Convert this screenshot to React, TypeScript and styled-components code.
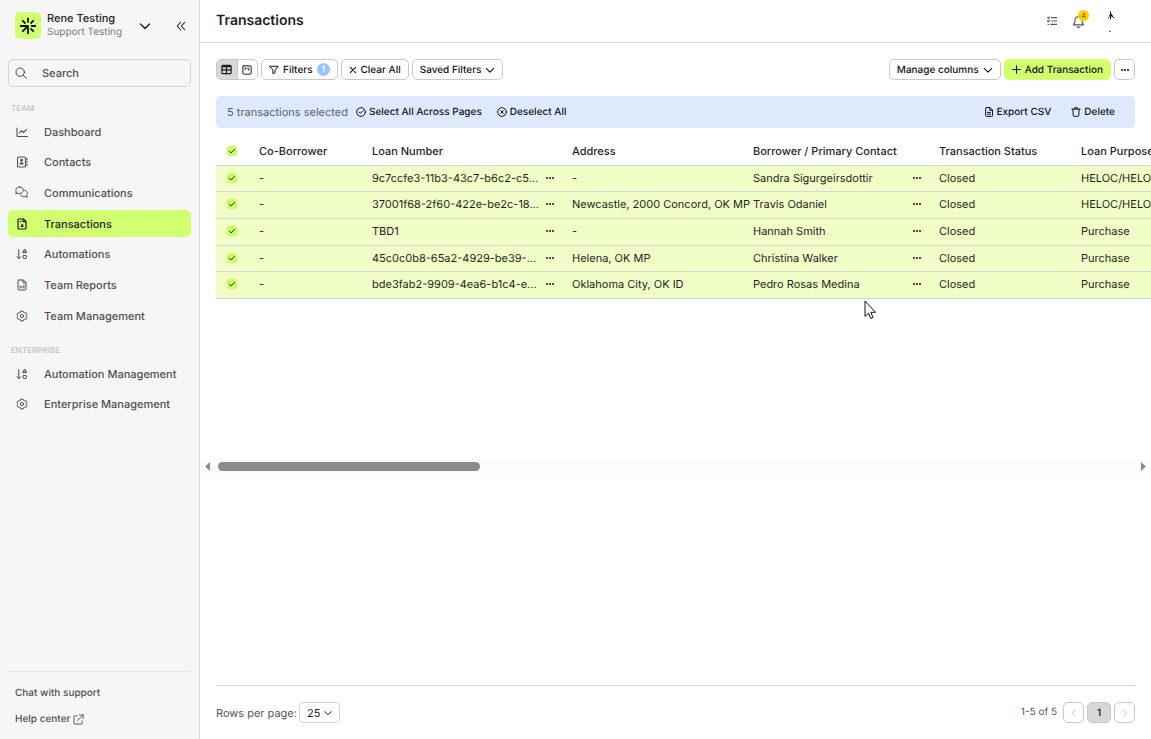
import React from "react";
import styled, { createGlobalStyle, css } from "styled-components";

const Global = createGlobalStyle`
  *, *::before, *::after { box-sizing: border-box; }
  html, body, #root { height: 100%; }
  body {
    margin: 0;
    background: #fff;
    color: #1f1f1f;
    font: 400 11px/16px Inter, "Liberation Sans", sans-serif;
    text-rendering: geometricPrecision;
  }
  button, input, select { font: inherit; color: inherit; text-rendering: inherit; }
  h1, h2, p, ul { margin: 0; padding: 0; }
`;

/* ---------- icons ---------- */

type IconProps = { size?: number; weight?: number; box?: number; children?: React.ReactNode };

const Svg = styled.svg`
  display: block;
  flex: none;
`;

const Icon = ({ size = 12, weight = 1.2, box = 12, children }: IconProps) => (
  <Svg
    width={size}
    height={size}
    viewBox={`0 0 ${box} ${box}`}
    fill="none"
    stroke="currentColor"
    strokeWidth={weight}
    strokeLinecap="round"
    strokeLinejoin="round"
    aria-hidden="true"
  >
    {children}
  </Svg>
);

const ChevronDown = ({ size = 10, weight = 1.2 }: IconProps) => (
  <Icon size={size} weight={weight}><path d="M1.5 4 6 8.5 10.5 4" /></Icon>
);
const ChevronLeft = () => <Icon size={8}><path d="M8 1.5 3.5 6 8 10.5" /></Icon>;
const ChevronRight = () => <Icon size={8}><path d="M4 1.5 8.5 6 4 10.5" /></Icon>;
const CollapseIcon = () => (
  <Icon size={10} weight={1.3}><path d="M5.5 1.500 1.500 6l4 4.500M10.500 1.500 6.500 6l4 4.500" /></Icon>
);
const SearchIcon = () => (
  <Icon size={12} weight={1}><circle cx="5.2" cy="5.2" r="4.2" /><path d="m8.4 8.4 2.9 2.9" /></Icon>
);
const DashboardIcon = () => (
  <Icon weight={1.1}><path d="M1 2v7.500a1 1 0 0 0 1 1h9.500M3.300 7l2-2.500 2 2 3.200-2.900" /></Icon>
);
const ContactsIcon = () => (
  <Icon weight={1.1}>
    <rect x="1.5" y="1" width="8" height="10" rx="1.3" />
    <path d="M11 2.400v1.300M11 5.400v1.300M11 8.400v1.300" />
    <circle cx="5.500" cy="4.300" r=".9" fill="currentColor" />
    <path d="M3.900 8c0-1.500 3.200-1.500 3.200 0z" fill="currentColor" />
  </Icon>
);
const ChatsIcon = () => (
  <Icon size={13} box={13} weight={1}>
    <path d="M4.500 1C2.500 1 .8 2.300.8 4.200c0 .8.2 1.300.6 1.800L.7 7.700l2-.5c.6.2 1.200.3 1.800.3 2.100 0 3.800-1.400 3.800-3.300S6.600 1 4.500 1z" />
    <path d="M9.600 4.500c1.600.3 2.800 1.500 2.800 3 0 .7-.3 1.300-.7 1.800l.6 1.900-2-.6c-2 .6-4.300-.1-5.100-1.800" />
  </Icon>
);
const TransactionDocIcon = () => (
  <Icon weight={1.2}>
    <path d="M3 1h4.500L10 3.500V10a1 1 0 0 1-1 1H3a1 1 0 0 1-1-1V2a1 1 0 0 1 1-1z" />
    <path d="M7 1.200v2.500h2.800M4.200 3.700h.5M5 8.500h2M5.500 7.300l.7-.6.7.6" />
  </Icon>
);
const AutomationIcon = () => (
  <Icon weight={1}>
    <path d="M2.800 1.500v9M1 8.700l1.800 2 1.800-2" />
    <path d="m8.800 1.300 1.900 3.200H6.900z" fill="currentColor" fillOpacity=".4" />
    <rect x="7.200" y="7.300" width="3.200" height="3.200" rx=".6" />
  </Icon>
);
const ReportIcon = () => (
  <Icon weight={1}>
    <path d="M3 1h4.500L10 3.500V10a1 1 0 0 1-1 1H3a1 1 0 0 1-1-1V2a1 1 0 0 1 1-1z" />
    <path d="M7 1.200v2.500h2.800M4.200 9V7M6 9V7.500M7.900 9V6" />
  </Icon>
);
const GearIcon = () => (
  <Icon weight={1}>
    <path d="M4.800 1.200h2.400l.4 1.300 1 .6 1.300-.3 1.200 2-.9 1v.6l.9 1-1.200 2-1.300-.3-1 .6-.4 1.300H4.800l-.4-1.300-1-.6-1.300.3-1.200-2 .9-1v-.6l-.9-1 1.200-2 1.300.3 1-.6z" />
    <circle cx="6" cy="6.100" r="1.600" />
  </Icon>
);
const ExternalIcon = () => (
  <Icon size={11} weight={1}><path d="M4.500 2H2a1 1 0 0 0-1 1v7a1 1 0 0 0 1 1h7a1 1 0 0 0 1-1V7.500M7 1h4v4M11 1 5 7" /></Icon>
);
const TableIcon = () => (
  <Icon size={11} weight={1.300}>
    <rect x="1" y="1.500" width="10" height="9" rx="1" />
    <path d="M1 2.800h10M1 6.500h10M6 3v7.500" />
  </Icon>
);
const BoardIcon = () => (
  <Icon size={10}><rect x="1" y="1" width="10" height="10" rx="1.300" /><path d="M3.800 3.500v2M6 3.500v1M8.200 3.500v3" /></Icon>
);
const FunnelIcon = () => (
  <Icon size={10}><path d="M1 1.500h10L7.300 6.300V9L4.700 10.700V6.300z" /></Icon>
);
const CloseIcon = () => <Icon size={8} weight={1.600}><path d="m2 2 8 8M10 2l-8 8" /></Icon>;
const PlusIcon = () => <Icon size={9} weight={1.400}><path d="M6 1v10M1 6h10" /></Icon>;
const DotsIcon = ({ size = 12 }: IconProps) => (
  <Icon size={size}>
    <g fill="currentColor" stroke="none">
      <rect x="2" y="5" width="2" height="2" rx=".9" />
      <rect x="5" y="5" width="2" height="2" rx=".9" />
      <rect x="8" y="5" width="2" height="2" rx=".9" />
    </g>
  </Icon>
);
const CheckCircleIcon = () => (
  <Icon size={10}><circle cx="6" cy="6" r="5.200" /><path d="m3.700 6.200 1.600 1.600 3-3.400" /></Icon>
);
const CloseCircleIcon = () => (
  <Icon size={10}><circle cx="6" cy="6" r="5.200" /><path d="m4.300 4.300 3.400 3.400M7.700 4.300 4.300 7.700" /></Icon>
);
const FileIcon = () => (
  <Icon size={10}>
    <path d="M3 .7h4.300L10.300 3.700v6.600a1 1 0 0 1-1 1H3a1 1 0 0 1-1-1V1.700a1 1 0 0 1 1-1z" />
    <path d="M7 .8V4h3M4.200 6.500h3.600M4.200 8.700h3.600" />
  </Icon>
);
const TrashIcon = () => (
  <Icon size={10}><path d="M1 2.500h10M4 2.300l.5-1.500h3L8 2.300M2.200 2.800l.5 7.500a1 1 0 0 0 1 .9h4.600a1 1 0 0 0 1-.9l.5-7.500" /></Icon>
);
const ChecklistIcon = () => (
  <Icon size={10} weight={1.4}>
    <path d="M5.500 2h6M5.500 6h6M4.500 10h7M.7 2l.9.900 1.600-2M.7 6l.9.900 1.600-2M1.300 10h.5" />
  </Icon>
);
const BellIcon = () => (
  <Icon size={13} weight={1}>
    <path d="M6 .6v.8M6 1.500c2 0 3.200 1.500 3.200 3.300 0 2.400.7 3.200 1.600 4.300H1.200c.9-1.100 1.600-1.900 1.600-4.300C2.800 3 4 1.500 6 1.500zM4.700 10.800c.6.800 2 .8 2.600 0" />
  </Icon>
);
const AvatarMark = () => (
  <Svg width="12" height="22" viewBox="0 0 12 22" fill="#111" aria-hidden="true">
    <path d="M6 .5h1V3h1v1.500h1V6H8v-.5H7v2L6 9V5.500H5V4.300h1z" />
    <path d="M4 6.500h1v1H4zM9 6h1v1H9zM5.500 19.500h1V21h-1z" />
  </Svg>
);
const LogoMark = () => (
  <Icon size={18} box={18} weight={1.8}>
    <g strokeLinecap="butt">
      <path d="M9 .8v4.700M1 9h5M12 9h5M3.300 3.300l3.200 3.200M14.700 3.300l-3.200 3.200M3.300 14.700 9 9M14.700 14.700l-3.200-3.200" />
      <path d="M9 17V9H4.500" />
    </g>
  </Icon>
);

/* ---------- shell ---------- */

const Shell = styled.div`
  display: flex;
  min-height: 100vh;
`;
const Sidebar = styled.aside`
  display: flex;
  flex-direction: column;
  flex: none;
  width: 200px;
  padding: 0 8px;
  background: #f6f6f6;
  border-right: 1px solid #d6d6d6;
`;
const Workspace = styled.div`
  display: flex;
  flex: none;
  align-items: center;
  height: 51px;
  padding-left: 7px;
`;
const Logo = styled.span`
  display: grid;
  place-items: center;
  flex: none;
  width: 26px;
  height: 27px;
  border-radius: 5px;
  background: #d1ff70;
  color: #111;
`;
const WorkspaceText = styled.div`
  flex: 1;
  padding-left: 6px;
  line-height: 13px;
  white-space: nowrap;
`;
const WorkspaceName = styled.div`
  font-weight: 500;
`;
const WorkspaceSub = styled.div`
  font-size: 10px;
  line-height: 14px;
  color: #7c7c7c;
`;
const GhostButton = styled.button<{ $w?: number }>`
  display: grid;
  place-items: center;
  flex: none;
  width: ${(p) => p.$w ?? 20}px;
  height: 20px;
  padding: 0;
  border: 0;
  background: none;
  cursor: pointer;
`;
const CollapseButton = styled(GhostButton)`
  margin-left: 16px;
`;
const SearchBox = styled.label`
  display: flex;
  flex: none;
  align-items: center;
  gap: 15px;
  height: 28px;
  margin-top: 8px;
  padding: 0 6px;
  border: 1px solid #d4d4d4;
  border-radius: 5px;
  color: #444;
`;
const SearchInput = styled.input`
  flex: 1;
  min-width: 0;
  padding: 0;
  border: 0;
  outline: 0;
  background: none;
  font-weight: 500;
  &::placeholder { color: #505050; opacity: 1; }
`;
const GroupTitle = styled.h2`
  margin: 15px 3px 4px;
  font-size: 8px;
  line-height: 12px;
  font-weight: 600;
  color: #c4c4c4;
`;
const NavList = styled.ul`
  list-style: none;
`;
const NavItem = styled.li`
  margin-bottom: 4px;
  &:nth-child(3n + 1) { margin-bottom: 3px; }
`;
const NavLink = styled.a<{ $active?: boolean }>`
  display: flex;
  align-items: center;
  height: 27px;
  padding-left: 7px;
  gap: 16px;
  border-radius: 5px;
  font-weight: 500;
  color: #505050;
  text-decoration: none;
  ${(p) => p.$active && css`background: #d1ff70; color: #1f1f1f;`}
`;
const NavIcon = styled.span`
  display: grid;
  place-items: center;
  width: 13px;
`;
const Support = styled.div`
  display: flex;
  flex-direction: column;
  gap: 10px;
  margin-top: auto;
  padding: 13px 7px 12px;
  border-top: 1px solid #e6e6e6;
`;
const SupportLink = styled.a`
  display: flex;
  align-items: center;
  gap: 3px;
  font-size: 10px;
  font-weight: 500;
  color: #505050;
  text-decoration: none;
`;

/* ---------- main ---------- */

const Main = styled.main`
  display: flex;
  flex: 1;
  flex-direction: column;
  min-width: 0;
`;
const Header = styled.header`
  display: flex;
  flex: none;
  align-items: center;
  justify-content: space-between;
  height: 43px;
  padding: 0 26px 0 16px;
  border-bottom: 1px solid #d6d6d6;
`;
const Title = styled.h1`
  font-size: 14px;
  line-height: 20px;
  font-weight: 600;
`;
const HeaderActions = styled.div`
  display: flex;
  align-items: center;
  gap: 6px;
  color: #555;
`;
const BellButton = styled(GhostButton)`
  position: relative;
`;
const Badge = styled.span`
  position: absolute;
  top: -1px;
  right: -1px;
  width: 11px;
  height: 11px;
  border-radius: 6px;
  background: #fc0;
  font-size: 7px;
  line-height: 11px;
  color: #6b5600;
  text-align: center;
`;
const Toolbar = styled.div`
  display: flex;
  flex: none;
  justify-content: space-between;
  margin: 16px;
`;
const ButtonRow = styled.div`
  display: flex;
  gap: 3px;
`;
const Button = styled.button<{ $primary?: boolean }>`
  display: flex;
  align-items: center;
  gap: 4px;
  height: 21px;
  padding: 0 7px;
  border: 1px solid ${(p) => (p.$primary ? "#d1ff70" : "#c9c9c9")};
  border-radius: 5px;
  background: ${(p) => (p.$primary ? "#d1ff70" : "#fff")};
  font-size: 10px;
  font-weight: 500;
  color: #111;
  white-space: nowrap;
  cursor: pointer;
`;
const SquareButton = styled(Button)<{ $w?: number; $on?: boolean }>`
  justify-content: center;
  width: ${(p) => p.$w ?? 21}px;
  padding: 0;
  ${(p) => p.$on && css`background: #d8d8d8;`}
  &:disabled { color: #b5b5b5; cursor: default; }
`;
const ViewToggle = styled.div`
  display: flex;
  overflow: hidden;
  width: 42px;
  height: 21px;
  border: 1px solid #c9c9c9;
  border-radius: 5px;
`;
const ViewButton = styled.button<{ $on?: boolean }>`
  display: grid;
  flex: 1;
  place-items: center;
  padding: 0;
  border: 0;
  background: ${(p) => (p.$on ? "#d8d8d8" : "#fff")};
  & + & { border-left: 1px solid #c9c9c9; }
`;
const Count = styled.span`
  width: 13px;
  height: 13px;
  border-radius: 7px;
  background: #94c5fb;
  font-size: 9px;
  line-height: 13px;
  color: #fff;
  text-align: center;
`;
const SelectionBar = styled.div`
  display: flex;
  flex: none;
  align-items: center;
  justify-content: space-between;
  height: 32px;
  margin: 0 16px;
  padding: 0 20px 0 11px;
  border-radius: 5px;
  background: #deeafc;
`;
const BarGroup = styled.div<{ $gap: number }>`
  display: flex;
  align-items: center;
  gap: ${(p) => p.$gap}px;
`;
const SelectedText = styled.span`
  color: #5c6068;
`;
const BarButton = styled.button`
  display: flex;
  align-items: center;
  gap: 3px;
  padding: 0;
  border: 0;
  background: none;
  font-size: 10px;
  font-weight: 500;
  color: #111;
  white-space: nowrap;
  cursor: pointer;
`;

/* ---------- table ---------- */

const TableArea = styled.div`
  position: relative;
  flex: none;
  height: 331px;
  padding-left: 16px;
  overflow: hidden;
`;
const Table = styled.table`
  width: 100%;
  min-width: 1020px;
  border-collapse: separate;
  border-spacing: 0;
  table-layout: fixed;
`;
const Th = styled.th<{ $w?: number }>`
  width: ${(p) => (p.$w ? `${p.$w}px` : "auto")};
  height: 38px;
  padding: 8px 8px 0;
  border-bottom: 1px solid #d6d6d6;
  font-weight: 500;
  text-align: left;
  white-space: nowrap;
`;
const Row = styled.tr`
  height: 27px;
  background: #f1fdc6;
  &:nth-child(3n + 1) { height: 26px; }
`;
const Td = styled.td`
  padding: 0 8px 2px;
  border-bottom: 1px solid #d6d6d6;
  line-height: 16px;
  white-space: nowrap;
`;
const CellWithMenu = styled.div`
  display: flex;
  align-items: center;
  justify-content: space-between;
`;
const MenuButton = styled(GhostButton)`
  width: 12px;
  height: 12px;
`;
const CheckLabel = styled.label`
  display: grid;
  width: 10px;
  margin-left: 3px;
  & > * { grid-area: 1 / 1; }
`;
const Check = styled.input`
  appearance: none;
  width: 10px;
  height: 10px;
  margin: 0;
  border-radius: 3px;
  background: #c9fb5e;
`;
const Scrollbar = styled.div`
  display: flex;
  flex: none;
  align-items: center;
  height: 15px;
  padding: 0 5px;
  gap: 8px;
  background: #fcfcfc;
  color: #8b8b8b;
`;
const Track = styled.div`
  flex: 1;
`;
const Thumb = styled.div`
  width: 262px;
  height: 9px;
  border-radius: 5px;
  background: #8b8b8b;
`;
const Pointer = styled.svg`
  position: absolute;
  left: 664px;
  top: 172px;
`;
const Footer = styled.footer`
  display: flex;
  flex: none;
  align-items: center;
  justify-content: space-between;
  margin: auto 16px 0;
  padding: 16px 0;
  border-top: 1px solid #d6d6d6;
  color: #555;
`;
const RowsLabel = styled.label`
  display: flex;
  align-items: center;
  gap: 2px;
`;
const SelectWrap = styled.span`
  display: grid;
  align-items: center;
  color: #1f1f1f;
  & > * { grid-area: 1 / 1; }
  & > svg { justify-self: end; margin-right: 8px; pointer-events: none; }
`;
const Select = styled.select`
  appearance: none;
  width: 41px;
  height: 21px;
  padding: 0 7px;
  border: 1px solid #d4d4d4;
  border-radius: 4px;
  background: #fff;
`;
const PageInfo = styled.span`
  margin-right: 3px;
  font-size: 10px;
  line-height: 21px;
`;

/* ---------- data ---------- */

const team = [
  { label: "Dashboard", icon: <DashboardIcon /> },
  { label: "Contacts", icon: <ContactsIcon /> },
  { label: "Communications", icon: <ChatsIcon /> },
  { label: "Transactions", icon: <TransactionDocIcon />, active: true },
  { label: "Automations", icon: <AutomationIcon /> },
  { label: "Team Reports", icon: <ReportIcon /> },
  { label: "Team Management", icon: <GearIcon /> },
];
const enterprise = [
  { label: "Automation Management", icon: <AutomationIcon /> },
  { label: "Enterprise Management", icon: <GearIcon /> },
];
const rows = [
  { loan: "9c7ccfe3-11b3-43c7-b6c2-c5...", address: "-", name: "Sandra Sigurgeirsdottir", purpose: "HELOC/HELOAN" },
  { loan: "37001f68-2f60-422e-be2c-18...", address: "Newcastle, 2000 Concord, OK MP", name: "Travis Odaniel", purpose: "HELOC/HELOAN" },
  { loan: "TBD1", address: "-", name: "Hannah Smith", purpose: "Purchase" },
  { loan: "45c0c0b8-65a2-4929-be39-...", address: "Helena, OK MP", name: "Christina Walker", purpose: "Purchase" },
  { loan: "bde3fab2-9909-4ea6-b1c4-e...", address: "Oklahoma City, OK ID", name: "Pedro Rosas Medina", purpose: "Purchase" },
];

type NavEntry = { label: string; icon: React.ReactNode; active?: boolean };

const Nav = ({ items }: { items: NavEntry[] }) => (
  <NavList>
    {items.map((item) => (
      <NavItem key={item.label}>
        <NavLink href="#" $active={item.active} aria-current={item.active ? "page" : undefined}>
          <NavIcon>{item.icon}</NavIcon>
          {item.label}
        </NavLink>
      </NavItem>
    ))}
  </NavList>
);

const Checkbox = ({ label }: { label: string }) => (
  <CheckLabel>
    <Check type="checkbox" defaultChecked aria-label={label} />
    <Icon size={10} weight={1.1}><path d="m3 6.300 2 2 4-4.300" /></Icon>
  </CheckLabel>
);

const WithMenu = ({ text }: { text: string }) => (
  <CellWithMenu>
    {text}
    <MenuButton aria-label="Cell options"><DotsIcon /></MenuButton>
  </CellWithMenu>
);

export default function App() {
  return (
    <>
      <Global />
      <Shell>
        <Sidebar>
          <Workspace>
            <Logo><LogoMark /></Logo>
            <WorkspaceText>
              <WorkspaceName>Rene Testing</WorkspaceName>
              <WorkspaceSub>Support Testing</WorkspaceSub>
            </WorkspaceText>
            <GhostButton aria-label="Switch workspace"><ChevronDown size={12} weight={1.4} /></GhostButton>
            <CollapseButton aria-label="Collapse sidebar"><CollapseIcon /></CollapseButton>
          </Workspace>
          <SearchBox>
            <SearchIcon />
            <SearchInput type="text" placeholder="Search" aria-label="Search" />
          </SearchBox>
          <nav>
            <GroupTitle>TEAM</GroupTitle>
            <Nav items={team} />
            <GroupTitle>ENTERPRISE</GroupTitle>
            <Nav items={enterprise} />
          </nav>
          <Support>
            <SupportLink href="#">Chat with support</SupportLink>
            <SupportLink href="#">Help center <ExternalIcon /></SupportLink>
          </Support>
        </Sidebar>
        <Main>
          <Header>
            <Title>Transactions</Title>
            <HeaderActions>
              <GhostButton aria-label="Tasks"><ChecklistIcon /></GhostButton>
              <BellButton aria-label="Notifications"><BellIcon /><Badge>4</Badge></BellButton>
              <GhostButton $w={31} aria-label="Account"><AvatarMark /></GhostButton>
            </HeaderActions>
          </Header>
          <Toolbar>
            <ButtonRow>
              <ViewToggle>
                <ViewButton $on aria-label="Table view"><TableIcon /></ViewButton>
                <ViewButton aria-label="Board view"><BoardIcon /></ViewButton>
              </ViewToggle>
              <Button><FunnelIcon />Filters<Count>1</Count></Button>
              <Button><CloseIcon />Clear All</Button>
              <Button>Saved Filters<ChevronDown weight={1.3} /></Button>
            </ButtonRow>
            <ButtonRow>
              <Button>Manage columns<ChevronDown weight={1.3} /></Button>
              <Button $primary><PlusIcon />Add Transaction</Button>
              <SquareButton aria-label="More"><DotsIcon /></SquareButton>
            </ButtonRow>
          </Toolbar>
          <SelectionBar>
            <BarGroup $gap={8}>
              <SelectedText>5 transactions selected</SelectedText>
              <BarGroup $gap={15}>
                <BarButton><CheckCircleIcon />Select All Across Pages</BarButton>
                <BarButton><CloseCircleIcon />Deselect All</BarButton>
              </BarGroup>
            </BarGroup>
            <BarGroup $gap={20}>
              <BarButton><FileIcon />Export CSV</BarButton>
              <BarButton><TrashIcon />Delete</BarButton>
            </BarGroup>
          </SelectionBar>
          <TableArea>
            <Table>
              <thead>
                <tr>
                  <Th $w={35}><Checkbox label="Select all rows" /></Th>
                  <Th $w={113}>Co-Borrower</Th>
                  <Th $w={200}>Loan Number</Th>
                  <Th $w={181}>Address</Th>
                  <Th $w={186}>Borrower / Primary Contact</Th>
                  <Th $w={142}>Transaction Status</Th>
                  <Th>Loan Purpose</Th>
                </tr>
              </thead>
              <tbody>
                {rows.map((row) => (
                  <Row key={row.loan}>
                    <Td><Checkbox label={`Select ${row.name}`} /></Td>
                    <Td>-</Td>
                    <Td><WithMenu text={row.loan} /></Td>
                    <Td>{row.address}</Td>
                    <Td><WithMenu text={row.name} /></Td>
                    <Td>Closed</Td>
                    <Td>{row.purpose}</Td>
                  </Row>
                ))}
              </tbody>
            </Table>
            <Pointer width="13" height="20" viewBox="0 0 13 20" fill="#fff" stroke="#111" aria-hidden="true">
              <path d="M1 1v15.500l3.500-3.300 2.300 5.300 2.300-1-2.300-5.200h4.700z" />
            </Pointer>
          </TableArea>
          <Scrollbar aria-hidden="true">
            <Svg width="5" height="9" viewBox="0 0 5 9" fill="currentColor"><path d="M5 0v9L0 4.500z" /></Svg>
            <Track><Thumb /></Track>
            <Svg width="5" height="9" viewBox="0 0 5 9" fill="currentColor"><path d="M0 0v9l5-4.500z" /></Svg>
          </Scrollbar>
          <Footer>
            <RowsLabel>
              Rows per page:
              <SelectWrap>
                <Select defaultValue="25"><option>25</option><option>50</option></Select>
                <ChevronDown size={8} weight={1.5} />
              </SelectWrap>
            </RowsLabel>
            <ButtonRow>
              <PageInfo>1-5 of 5</PageInfo>
              <SquareButton disabled aria-label="Previous page"><ChevronLeft /></SquareButton>
              <SquareButton $w={24} $on>1</SquareButton>
              <SquareButton disabled aria-label="Next page"><ChevronRight /></SquareButton>
            </ButtonRow>
          </Footer>
        </Main>
      </Shell>
    </>
  );
}
